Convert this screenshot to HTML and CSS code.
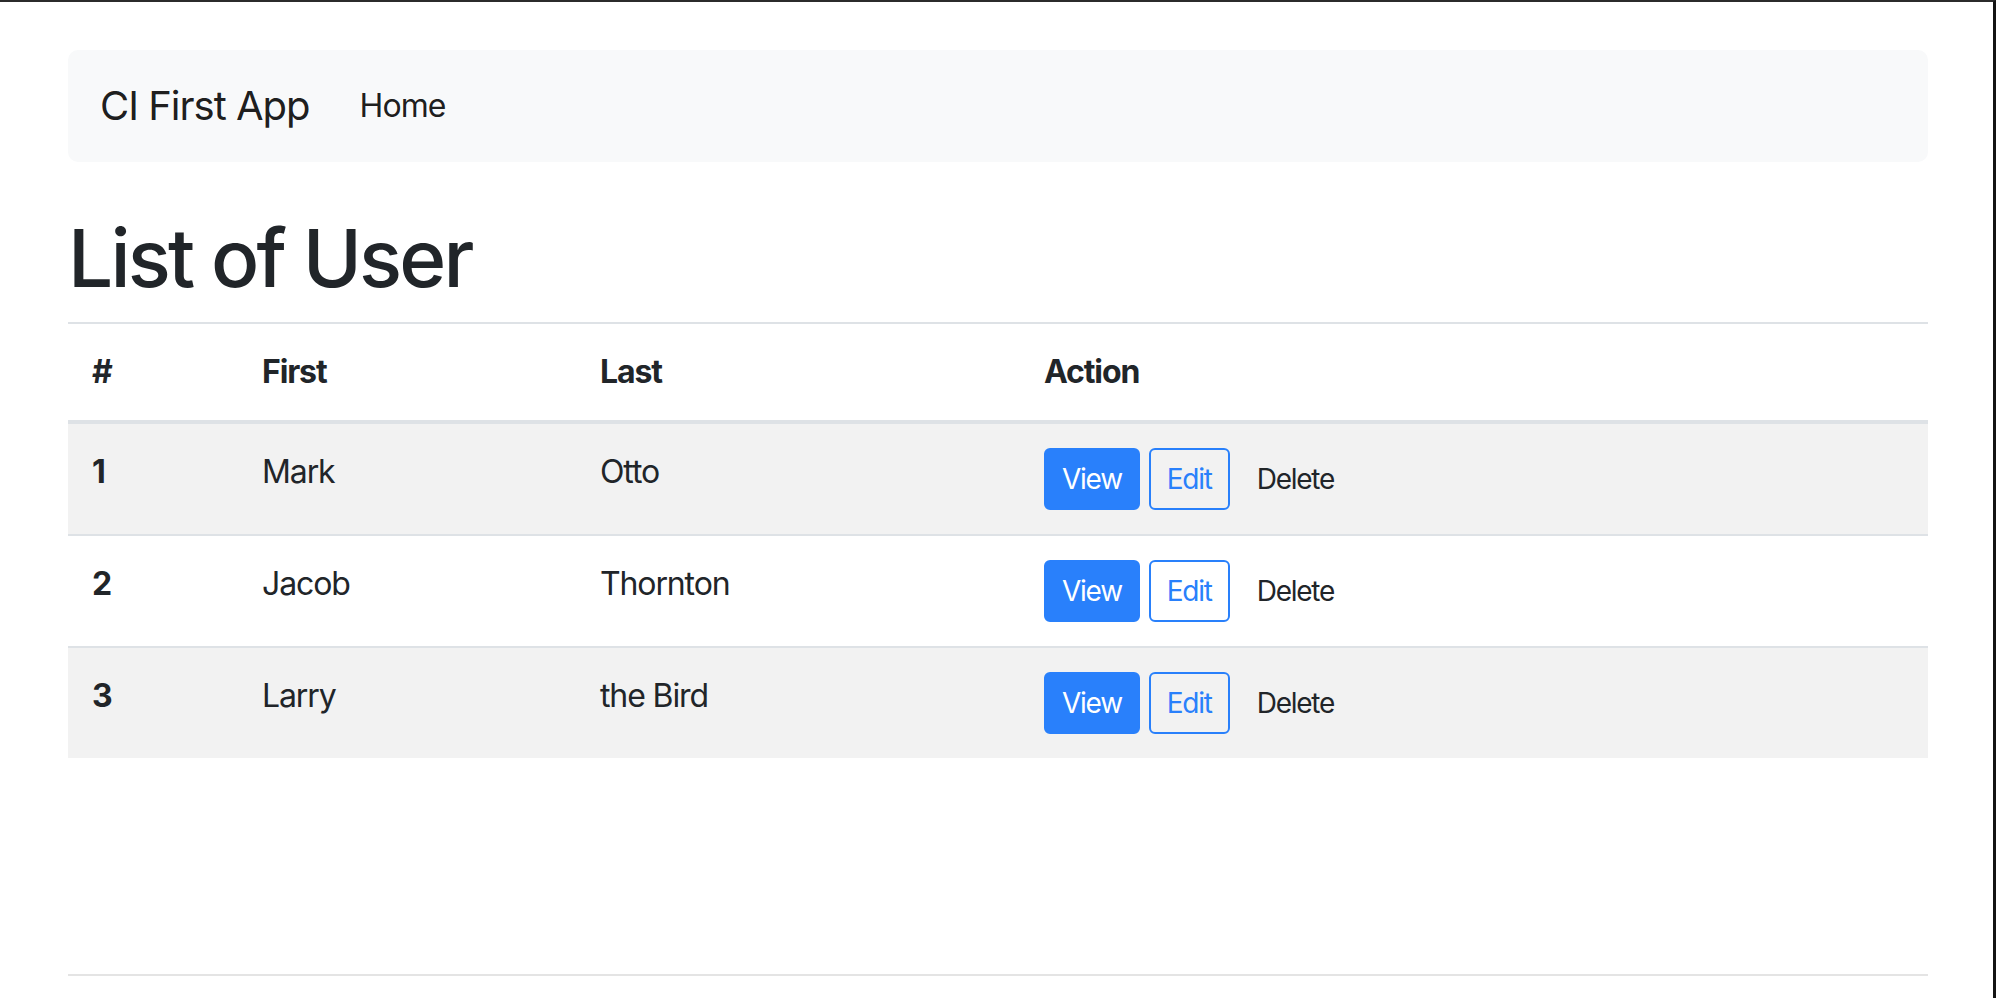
FILE: index.html
```html
<!DOCTYPE html>
<html lang="en">
<head>
<meta charset="utf-8">
<title>CI First App</title>
<link rel="stylesheet" href="styles.css">
</head>
<body>
<div class="page">
  <nav class="navbar">
    <a class="brand" href="#">CI First App</a>
    <a class="nav-link" href="#">Home</a>
  </nav>
  <h1 class="title">List of User</h1>
  <table class="users">
    <thead>
      <tr>
        <th class="col-num">#</th>
        <th class="col-first">First</th>
        <th class="col-last">Last</th>
        <th class="col-action">Action</th>
      </tr>
    </thead>
    <tbody>
      <tr>
        <th class="row-num">1</th>
        <td>Mark</td>
        <td>Otto</td>
        <td><div class="actions"><a class="btn btn-primary" href="#">View</a><a class="btn btn-outline" href="#">Edit</a><a class="btn btn-plain" href="#">Delete</a></div></td>
      </tr>
      <tr>
        <th class="row-num">2</th>
        <td>Jacob</td>
        <td>Thornton</td>
        <td><div class="actions"><a class="btn btn-primary" href="#">View</a><a class="btn btn-outline" href="#">Edit</a><a class="btn btn-plain" href="#">Delete</a></div></td>
      </tr>
      <tr>
        <th class="row-num">3</th>
        <td>Larry</td>
        <td>the Bird</td>
        <td><div class="actions"><a class="btn btn-primary" href="#">View</a><a class="btn btn-outline" href="#">Edit</a><a class="btn btn-plain" href="#">Delete</a></div></td>
      </tr>
    </tbody>
  </table>
  <hr class="footer-rule">
</div>
</body>
</html>
```
FILE: styles.css
```css
* { box-sizing: border-box; }

html, body {
  margin: 0;
  padding: 0;
}

body {
  height: 998px;
  overflow: hidden;
  background: #ffffff;
  border-top: 2px solid #2b2b2b;
  border-right: 3px solid #141414;
  font-family: Inter, "Noto Sans", "Liberation Sans", sans-serif;
  color: #212529;
}

.page {
  padding: 48px 65px 0 68px;
}

.navbar {
  display: flex;
  align-items: center;
  height: 112px;
  padding: 0 32px;
  background: #f8f9fa;
  border-radius: 10px;
}

.brand {
  font-size: 40px;
  line-height: 60px;
  letter-spacing: -0.025em;
  color: rgba(0, 0, 0, 0.9);
  text-decoration: none;
  margin-right: 34px;
}

.nav-link {
  font-size: 32px;
  line-height: 48px;
  letter-spacing: -0.03em;
  padding: 0 16px;
  color: rgba(0, 0, 0, 0.9);
  text-decoration: none;
}

.title {
  margin: 48px 0 16px;
  font-size: 80px;
  line-height: 96px;
  font-weight: 500;
  letter-spacing: -0.035em;
  color: #212529;
}

.users {
  width: 100%;
  border-collapse: collapse;
  font-size: 32px;
  line-height: 48px;
  letter-spacing: -0.035em;
  margin-bottom: 216px;
}

.users th,
.users td {
  padding: 24px;
  border-top: 2px solid #dee2e6;
  text-align: left;
  vertical-align: top;
}

.users th { font-weight: 700; }

.users thead th {
  border-bottom: 4px solid #dee2e6;
}

.users tbody tr:nth-child(odd) {
  background: #f2f2f2;
}

.col-num { width: 170px; }
.col-first { width: 338px; }
.col-last { width: 444px; }

.actions {
  display: flex;
  gap: 9px;
}

.btn {
  display: inline-block;
  font-size: 28px;
  line-height: 42px;
  letter-spacing: -0.045em;
  padding: 8px 16px;
  border: 2px solid transparent;
  border-radius: 6px;
  text-decoration: none;
}

.btn-primary {
  background: #2980fb;
  border-color: #2980fb;
  color: #ffffff;
}

.btn-outline {
  border-color: #2980fb;
  color: #2980fb;
}

.btn-plain {
  color: #212529;
}

.footer-rule {
  margin: 0;
  border: 0;
  border-top: 2px solid #e4e4e4;
}
```
